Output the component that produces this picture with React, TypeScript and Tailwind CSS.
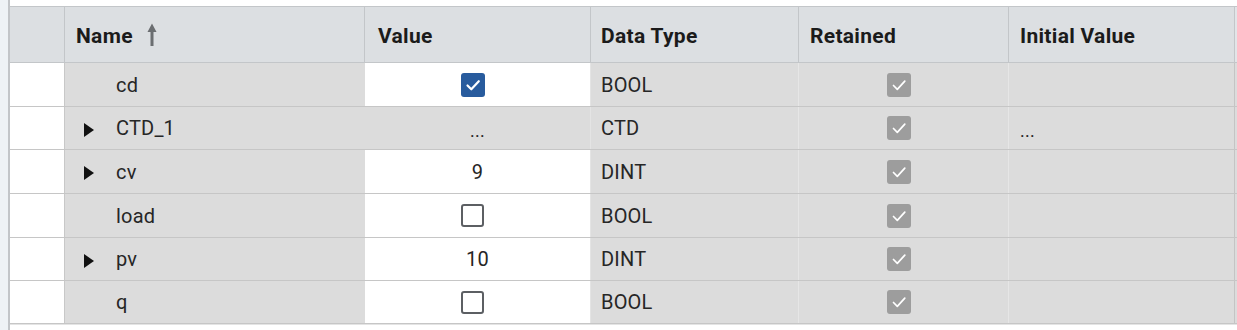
import React from "react";

type Row = {
  name: string;
  expandable: boolean;
  value: "checked" | "unchecked" | string;
  valueGray?: boolean;
  type: string;
  initial?: string;
  h: string;
};

const rows: Row[] = [
  { name: "cd", expandable: false, value: "checked", type: "BOOL", h: "h-[44px]" },
  { name: "CTD_1", expandable: true, value: "...", valueGray: true, type: "CTD", initial: "...", h: "h-[43px]" },
  { name: "cv", expandable: true, value: "9", type: "DINT", h: "h-[44px]" },
  { name: "load", expandable: false, value: "unchecked", type: "BOOL", h: "h-[44px]" },
  { name: "pv", expandable: true, value: "10", type: "DINT", h: "h-[43px]" },
  { name: "q", expandable: false, value: "unchecked", type: "BOOL", h: "h-[43px]" },
];

function Check({ stroke = 2.2 }: { stroke?: number }) {
  return (
    <svg width="24" height="24" viewBox="0 0 24 24" fill="none">
      <path d="M6.5 12.5l3.8 3.8L17.8 8.2" stroke="white" strokeWidth={stroke} strokeLinecap="round" strokeLinejoin="round" />
    </svg>
  );
}

function ValueBox({ on }: { on: boolean }) {
  if (on) {
    return (
      <span className="mr-[10px] flex size-[24px] items-center justify-center rounded-[3px] bg-[#285b9d]">
        <Check />
      </span>
    );
  }
  return <span className="mr-[10px] box-border size-[23px] rounded-[3px] border-[2.5px] border-[#5c5f63] bg-white" />;
}

function RetainedBox() {
  return (
    <span className="mr-[9px] flex size-[24px] items-center justify-center rounded-[3px] bg-[#9d9d9d]">
      <Check stroke={1.7} />
    </span>
  );
}

function SortUp() {
  return (
    <svg width="10" height="24" viewBox="0 0 10 24" className="ml-[14px] mt-[-4px]">
      <path d="M5 0.5L9.5 9H0.5Z" fill="#6b6e71" />
      <rect x="3.5" y="8" width="3" height="15" fill="#6b6e71" />
    </svg>
  );
}

function Caret() {
  return (
    <svg width="10" height="14" viewBox="0 0 10 14" className="mt-[3px]">
      <path d="M0 0L10 7L0 14Z" fill="#111" />
    </svg>
  );
}

const head =
  "flex h-full items-center pt-[5px] border-r border-[#c3c6c9] text-[21px] font-bold tracking-[0.3px] text-[#1b1b1b]";

export default function App() {
  return (
    <div className="flex h-[330px] w-[1237px] bg-white font-[Roboto,sans-serif]">
      <div className="w-[8px] bg-[#eef2f5]" />
      <div className="w-[2px] bg-[#c2c5c8]" />
      <div className="flex flex-1 flex-col">
        <div className="h-[6px]" />
        <div className="flex h-[57px] border-y border-[#c3c6c9] bg-[#dcdfe2]">
          <div className={`${head} w-[55px]`} />
          <div className={`${head} w-[300px] pl-[11px]`}>
            Name
            <SortUp />
          </div>
          <div className={`${head} w-[226px] pl-[13px]`}>Value</div>
          <div className={`${head} w-[208px] pl-[10px]`}>Data Type</div>
          <div className={`${head} w-[210px] pl-[11px]`}>Retained</div>
          <div className={`${head} w-[226px] pl-[11px]`}>Initial Value</div>
          <div className="flex-1 bg-[#e2e5e8]" />
        </div>
        {rows.map((r) => (
          <div key={r.name} className={`flex ${r.h} border-b border-[#c6c6c6] text-[20px] tracking-[0.2px] text-[#262626]`}>
            <div className="h-full w-[55px] border-r border-[#c8c8c8] bg-white" />
            <div className="flex h-full w-[300px] items-center bg-[#dcdcdc] pl-[19px]">
              <span className="flex w-[32px]">{r.expandable && <Caret />}</span>
              <span>{r.name}</span>
            </div>
            <div
              className={`flex h-full w-[226px] items-center justify-center border-r border-[#e4e4e4] ${
                r.valueGray ? "bg-[#dcdcdc]" : "bg-white"
              }`}
            >
              {r.value === "checked" ? (
                <ValueBox on />
              ) : r.value === "unchecked" ? (
                <ValueBox on={false} />
              ) : (
                <span className={r.value === "..." ? "text-[18px] pt-[4px]" : ""}>{r.value}</span>
              )}
            </div>
            <div className="flex h-full w-[208px] items-center border-r border-[#e6e6e6] bg-[#dcdcdc] pl-[10px]">
              {r.type}
            </div>
            <div className="flex h-full w-[210px] items-center justify-center border-r border-[#e6e6e6] bg-[#dcdcdc]">
              <RetainedBox />
            </div>
            <div className="flex h-full w-[226px] items-center border-r border-[#c4c4c4] bg-[#dcdcdc] pl-[11px]">
              {r.initial && <span className="pt-[4px] text-[18px]">{r.initial}</span>}
            </div>
            <div className="h-full flex-1 bg-[#dcdcdc]" />
          </div>
        ))}
        <div className="h-px bg-[#e4e4e4]" />
      </div>
    </div>
  );
}
